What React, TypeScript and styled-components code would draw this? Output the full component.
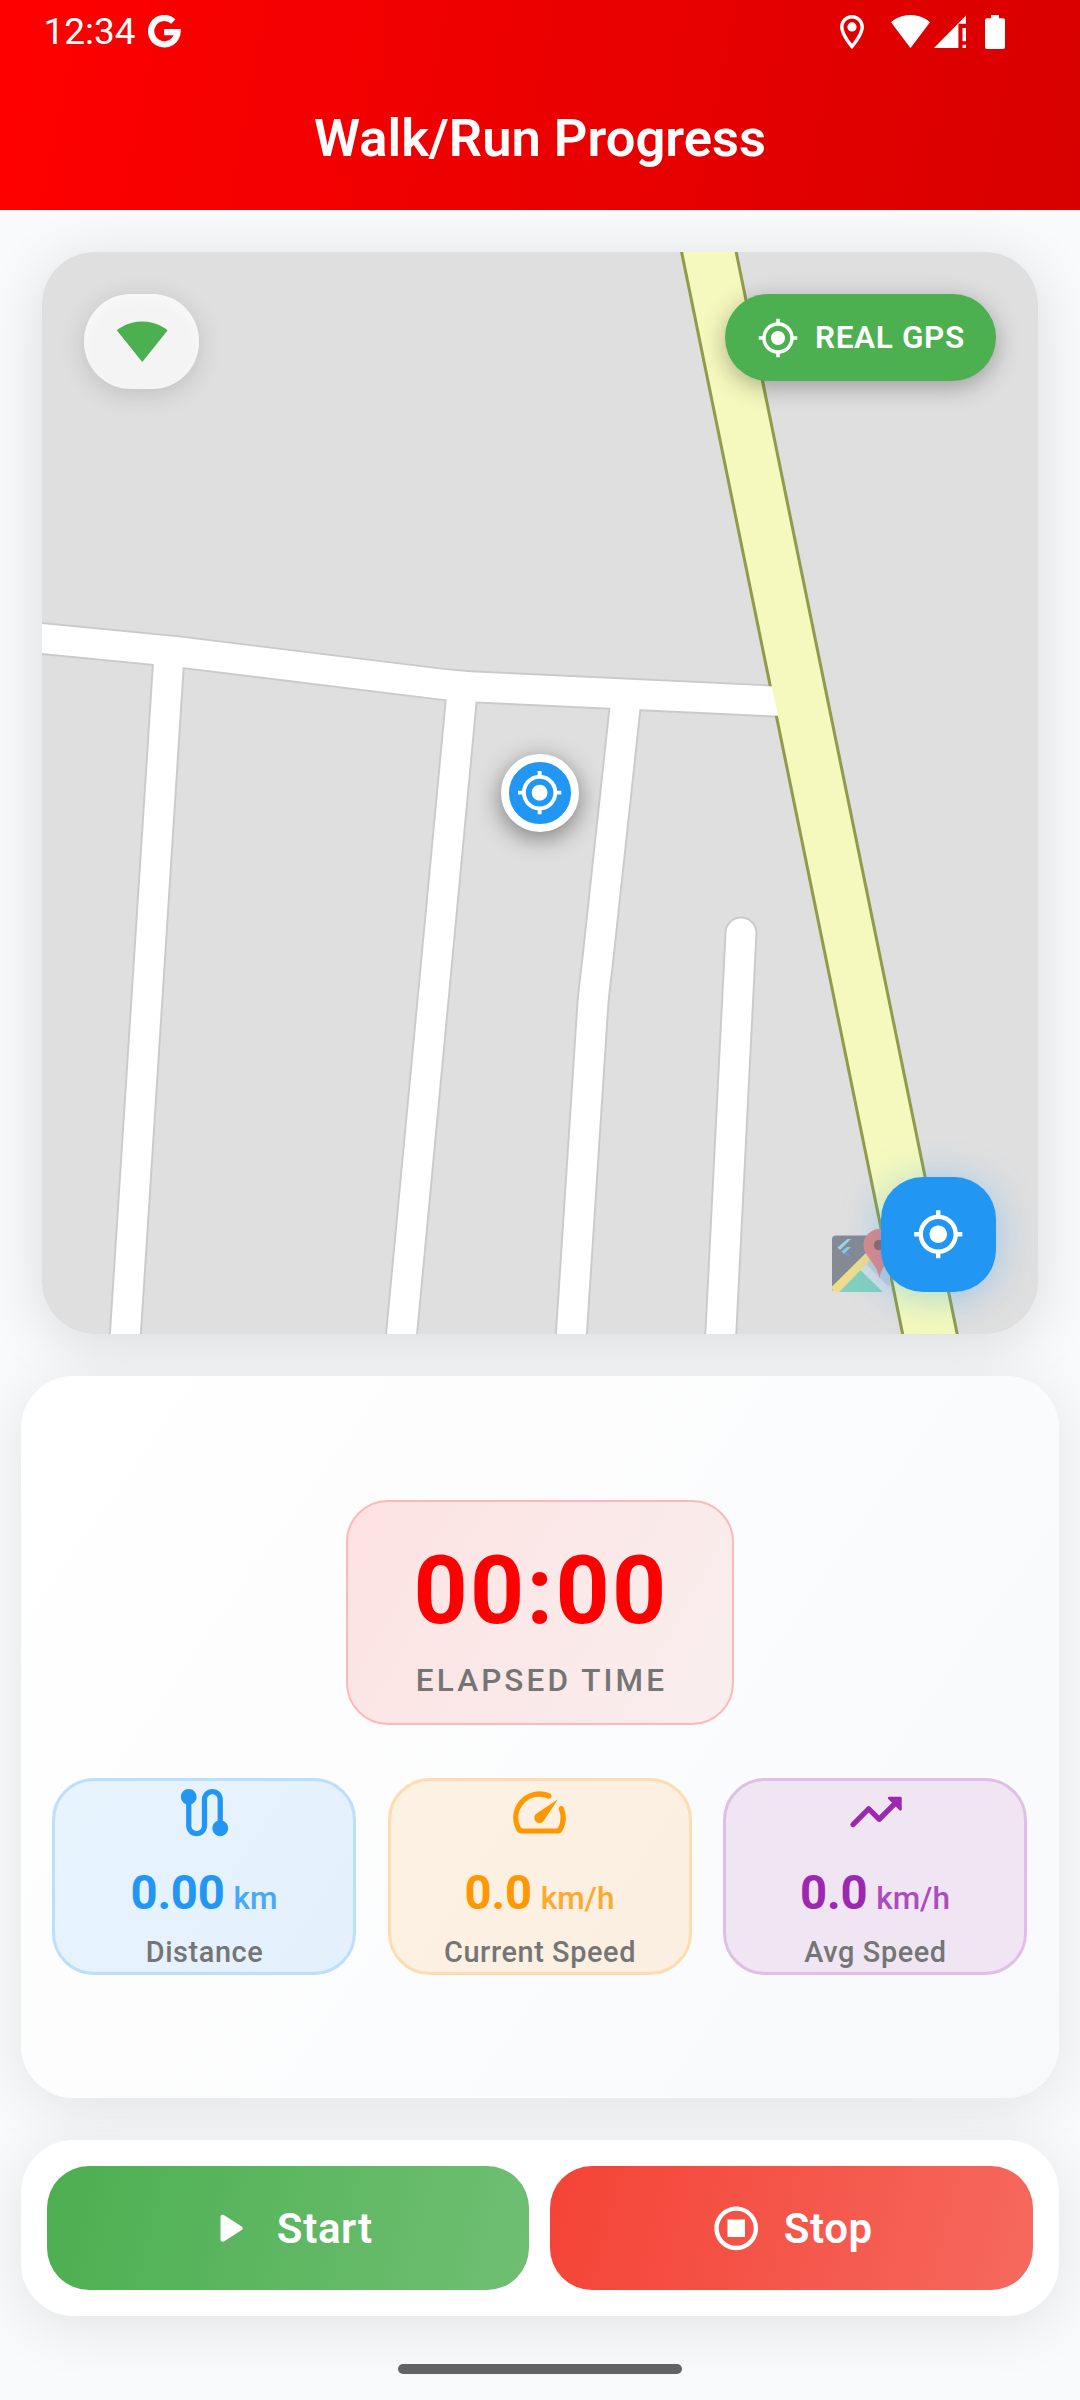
import React from "react";
import styled, { createGlobalStyle } from "styled-components";

const GlobalStyle = createGlobalStyle`
  * { box-sizing: border-box; }
  body { margin: 0; background: #f8fafc; }
  svg { display: block; flex: none; }
`;

const Screen = styled.div`
  width: 1080px;
  height: 2400px;
  overflow: hidden;
  display: flex;
  flex-direction: column;
  background: #f8fafc;
  font-family: Roboto, "Noto Sans", sans-serif;
`;

const Header = styled.header`
  position: relative;
  z-index: 1;
  flex: none;
  height: 210px;
  display: flex;
  flex-direction: column;
  color: #fff;
  background: linear-gradient(101deg, #ff0000 0%, #d80000 100%);
`;

const StatusBar = styled.div`
  height: 63px;
  padding: 0 75px 0 43.5px;
  display: flex;
  justify-content: space-between;
  align-items: center;
`;

const StatusLeft = styled.div`
  display: flex;
  align-items: center;
  gap: 12.5px;
`;

const Clock = styled.span`
  font-size: 37px;
  line-height: 43px;
`;

const StatusRight = styled.div`
  display: flex;
  align-items: center;
`;

const Gap = styled.span<{ $w: number }>`
  width: ${(p) => p.$w}px;
`;

const Toolbar = styled.div`
  flex: 1;
  padding-top: 3px;
  display: flex;
  align-items: center;
  justify-content: center;
`;

const Title = styled.h1`
  margin: 0;
  font-size: 52.5px;
  font-weight: 600;
  line-height: 62px;
`;

const Content = styled.main`
  flex: 1;
  padding: 42px 21px 0;
  display: flex;
  flex-direction: column;
  gap: 42px;
`;

const MapShell = styled.section`
  flex: none;
  margin: 0 21px;
  border-radius: 52.5px;
  box-shadow: 0 10px 60px rgba(0, 0, 0, 0.13);
`;

const MapCard = styled.div`
  position: relative;
  height: 1082px;
  border-radius: 52.5px;
  overflow: hidden;
  background: #dfdfdf;
`;

const SignalChip = styled.div`
  position: absolute;
  left: 42px;
  top: 42px;
  width: 115px;
  height: 94.5px;
  padding-left: 1px;
  border-radius: 47px;
  display: flex;
  align-items: center;
  justify-content: center;
  color: #4caf50;
  background: #f4f4f4;
  box-shadow: 0 5px 26px rgba(0, 0, 0, 0.14), inset 0 5px 14px rgba(255, 255, 255, 0.5);
`;

const GpsChip = styled.div`
  position: absolute;
  right: 42px;
  top: 42px;
  width: 271px;
  height: 87px;
  padding-left: 32px;
  border-radius: 43.5px;
  display: flex;
  align-items: center;
  gap: 16px;
  color: #fff;
  font-size: 31.5px;
  font-weight: 600;
  letter-spacing: 0.65px;
  white-space: nowrap;
  background: #4caf50;
  box-shadow: 0 6px 24px rgba(0, 0, 0, 0.3);
`;

const Marker = styled.div`
  position: absolute;
  left: 459px;
  top: 502px;
  width: 78px;
  height: 78px;
  border: 8px solid #fff;
  border-radius: 50%;
  display: flex;
  align-items: center;
  justify-content: center;
  background: #2196f3;
  color: #fff;
  box-shadow: 0 6px 24px rgba(0, 0, 0, 0.45);
`;

const LocateButton = styled.button`
  position: absolute;
  right: 42px;
  bottom: 42px;
  width: 115.5px;
  height: 115.5px;
  padding: 0;
  border: 0;
  border-radius: 42px;
  display: flex;
  align-items: center;
  justify-content: center;
  color: #fff;
  background: #2196f3;
  box-shadow: 0 5px 38px rgba(33, 150, 243, 0.36);
`;

const Panel = styled.section<{ $height: number; $bg: string }>`
  position: relative;
  flex: none;
  height: ${(p) => p.$height}px;
  border-radius: 52.5px;
  background: ${(p) => p.$bg};
  box-shadow: 0 10px 60px rgba(0, 0, 0, 0.095);
`;

const StatsPanel = styled(Panel)`
  padding: 124px 32px 0 31px;
  display: flex;
  flex-direction: column;
  align-items: center;
  gap: 53px;
`;

const TimerBox = styled.div`
  width: 388px;
  height: 225px;
  padding-top: 34px;
  border: 2px solid #fbb9b9;
  border-radius: 42px;
  display: flex;
  flex-direction: column;
  align-items: center;
  gap: 16px;
  background: linear-gradient(120deg, #fde2e2, #f9eeee);
`;

const TimerValue = styled.div`
  font-size: 94.5px;
  line-height: 110px;
  font-weight: 700;
  letter-spacing: 2.3px;
  margin-right: -3px;
  color: #fd0000;
`;

const TimerLabel = styled.div`
  font-size: 31.5px;
  line-height: 37px;
  font-weight: 500;
  letter-spacing: 3.1px;
  margin-right: -4px;
  color: #757575;
`;

const StatRow = styled.div`
  align-self: stretch;
  display: grid;
  grid-template-columns: repeat(3, 1fr);
  gap: 31.5px;
`;

const StatCard = styled.div<{ $color: string; $line: string; $bg: string }>`
  height: 197px;
  border: 3px solid ${(p) => p.$line};
  border-radius: 42px;
  display: flex;
  flex-direction: column;
  align-items: center;
  color: ${(p) => p.$color};
  background: ${(p) => p.$bg};
`;

const StatFigure = styled.div`
  margin-top: 21px;
  display: flex;
  align-items: baseline;
  gap: 9px;
  line-height: 56px;
`;

const Figure = styled.span`
  font-size: 47.25px;
  font-weight: 700;
  letter-spacing: -0.25px;
`;

const Unit = styled.span`
  font-size: 31.5px;
  font-weight: 500;
  opacity: 0.8;
`;

const StatLabel = styled.div`
  margin-top: 8px;
  padding-left: 1px;
  font-size: 28.875px;
  line-height: 34px;
  font-weight: 500;
  letter-spacing: 0.6px;
  color: #757575;
`;

const ActionPanel = styled(Panel)`
  padding: 26px;
  display: grid;
  grid-template-columns: 482px 483px;
  gap: 21px;
`;

const ActionButton = styled.button<{ $from: string; $to: string }>`
  height: 124px;
  padding: 0;
  border: 0;
  border-radius: 42px;
  display: flex;
  align-items: center;
  justify-content: center;
  gap: 21px;
  color: #fff;
  font-family: inherit;
  font-size: 42px;
  font-weight: 600;
  letter-spacing: 0.65px;
  background: linear-gradient(104.4deg, ${(p) => p.$from}, ${(p) => p.$to});
`;

const HomeIndicator = styled.div`
  position: relative;
  flex: none;
  align-self: center;
  width: 284px;
  height: 10px;
  margin-top: 6px;
  border-radius: 5px;
  background: #616462;
`;

const Glyph = ({ d, size }: { d: string; size: number }) => (
  <svg width={size} height={size} viewBox="0 0 24 24" fill="currentColor">
    <path d={d} />
  </svg>
);

const GPS =
  "M12 8c-2.21 0-4 1.79-4 4s1.79 4 4 4 4-1.79 4-4-1.79-4-4-4zm8.94 3A8.994 8.994 0 0 0 13 3.06V1h-2v2.06A8.994 8.994 0 0 0 3.06 11H1v2h2.06A8.994 8.994 0 0 0 11 20.94V23h2v-2.06A8.994 8.994 0 0 0 20.94 13H23v-2h-2.06zM12 19c-3.87 0-7-3.13-7-7s3.13-7 7-7 7 3.13 7 7-3.13 7-7 7z";
const WIFI =
  "M12.01 21.49L23.64 7c-.45-.34-4.93-4-11.64-4C5.28 3 .81 6.66.36 7l11.63 14.49.01.01.01-.01z";
const ROUTE =
  "M19 15.18V7c0-2.21-1.79-4-4-4s-4 1.79-4 4v10c0 1.1-.9 2-2 2s-2-.9-2-2V8.82C8.16 8.4 9 7.3 9 6c0-1.66-1.34-3-3-3S3 4.34 3 6c0 1.3.84 2.4 2 2.82V17c0 2.21 1.79 4 4 4s4-1.79 4-4V7c0-1.1.9-2 2-2s2 .9 2 2v8.18c-1.16.41-2 1.51-2 2.82 0 1.66 1.34 3 3 3s3-1.34 3-3c0-1.3-.84-2.4-2-2.82z";
const SPEED =
  "M19.46 10a1 1 0 0 0-.07 1 7.55 7.55 0 0 1 .52 1.81 8 8 0 0 1-.69 4.73 1 1 0 0 1-.89.53H5.68a1 1 0 0 1-.89-.54A8 8 0 0 1 13 6.06a7.69 7.69 0 0 1 2.11.56 1 1 0 0 0 1-.07 1 1 0 0 0-.13-1.76A10 10 0 0 0 3.35 19a2 2 0 0 0 1.72 1h13.85a2 2 0 0 0 1.74-1 10 10 0 0 0 .55-8.89 1 1 0 0 0-1.75-.11zM10.59 12.59a2 2 0 0 0 2.83 2.83l5.66-8.49z";
const TREND =
  "m16.85 6.85 1.44 1.44-4.88 4.88-3.29-3.29a.996.996 0 0 0-1.41 0l-6 6.01a.996.996 0 1 0 1.41 1.41L9.41 12l3.29 3.29c.39.39 1.02.39 1.41 0l5.59-5.58 1.44 1.44a.5.5 0 0 0 .85-.35V6.5a.48.48 0 0 0-.49-.5h-4.29a.5.5 0 0 0-.36.85z";
const PLAY =
  "M8 6.82v10.36c0 .79.87 1.27 1.54.84l8.14-5.18c.62-.39.62-1.29 0-1.69L9.54 5.98A.998.998 0 0 0 8 6.82z";
const STOP =
  "M12 2C6.48 2 2 6.48 2 12s4.48 10 10 10 10-4.48 10-10S17.52 2 12 2zm0 18c-4.42 0-8-3.58-8-8s3.58-8 8-8 8 3.58 8 8-3.58 8-8 8zm4-4H8V8h8v8z";

const streets = [
  "M30 637.3 L175 651.5 L440 684 Q455 686 470 686.7 L800 702.3",
  "M169 655 L125 1340",
  "M462 692 L401 1340",
  "M626.3 696 L597 967 Q594 990 592.8 1005 L571 1340",
  "M741 933 L720.5 1340",
];

const StreetMap = () => (
  <svg width="996" height="1082" viewBox="42 252 996 1082" fill="none">
    <g stroke="#cacaca" strokeWidth="32.8" strokeLinecap="round" strokeLinejoin="round">
      {streets.map((d) => (
        <path key={d} d={d} />
      ))}
    </g>
    <path d="M704.8 232 L933.8 1353" stroke="#929b4c" strokeWidth="56.5" />
    <g stroke="#fff" strokeWidth="29" strokeLinecap="round" strokeLinejoin="round">
      {streets.map((d) => (
        <path key={d} d={d} />
      ))}
    </g>
    <path d="M704.8 232 L933.8 1353" stroke="#f5f9be" strokeWidth="50.4" />
    <g>
      <path d="M836 1235.5H888L832 1291V1239.5Q832 1235.5 836 1235.5Z" fill="#868a93" />
      <path d="M861 1269L885 1245L890 1250V1285L888.5 1286.5Z" fill="#c3ccd3" />
      <path d="M839 1292L860.5 1270L883 1292Z" fill="#83d0be" />
      <path d="M861 1269L866 1264L888.5 1286.5Q887 1291.5 883 1292Z" fill="#d6dee5" />
      <path d="M832 1286.5L880 1239L884 1246.5L838.5 1292H836Q832 1292 832 1288Z" fill="#f0dc8b" />
      <path d="M837.5 1247.5L847.5 1239H851L840 1250Z" fill="#97d8eb" />
      <path d="M841.5 1251.5L847 1247H851L844 1254Z" fill="#8bc8e6" />
      <path d="M844 1254L846 1252L851 1255.5H847Z" fill="#6c9fce" />
      <path d="M879.5 1278.5C878 1264 863.5 1257 863.5 1245A16 16 0 0 1 895.5 1245C895.5 1257 881 1264 879.5 1278.5Z" fill="#e18885" />
      <circle cx="879" cy="1245" r="5.2" fill="#97625f" />
    </g>
  </svg>
);

export default function App() {
  return (
    <>
      <GlobalStyle />
      <Screen>
        <Header>
          <StatusBar>
            <StatusLeft>
              <Clock>12:34</Clock>
              <svg width="33" height="33" viewBox="148.5 15 33 33" fill="none">
                <path d="M173.8 21.5A13.2 13.2 0 1 0 178 32.2H164.6" stroke="#fff" strokeWidth="6.3" />
              </svg>
            </StatusLeft>
            <StatusRight>
              <svg width="24" height="34" viewBox="5 2 14 20" fill="#fff">
                <path d="M12 2C8.13 2 5 5.13 5 9c0 5.25 7 13 7 13s7-7.75 7-13c0-3.87-3.13-7-7-7zM7 9c0-2.76 2.24-5 5-5s5 2.24 5 5c0 2.88-2.88 7.19-5 9.88C9.92 16.21 7 11.85 7 9z" />
                <circle cx="12" cy="9" r="2.7" />
              </svg>
              <Gap $w={27} />
              <svg width="39" height="33" viewBox="0.36 3 23.28 18.5" preserveAspectRatio="none" fill="#fff">
                <path d={WIFI} />
              </svg>
              <Gap $w={3.5} />
              <svg width="32.5" height="33" viewBox="0 0 32.5 33" fill="#fff">
                <path d="M0 33H24.4V8.7H32.4V0ZM28.5 13H32.4V26.3H28.5ZM28.5 29.7H32.4V33H28.5Z" />
              </svg>
              <Gap $w={19} />
              <svg width="20" height="34" viewBox="0 0 20 34" fill="#fff">
                <path d="M6 0H14V3.3H18Q20 3.3 20 5.3V32Q20 34 18 34H2Q0 34 0 32V5.3Q0 3.3 2 3.3H6Z" />
              </svg>
            </StatusRight>
          </StatusBar>
          <Toolbar>
            <Title>Walk/Run Progress</Title>
          </Toolbar>
        </Header>

        <Content>
          <MapShell>
            <MapCard>
              <StreetMap />
              <SignalChip>
                <Glyph d={WIFI} size={52.5} />
              </SignalChip>
              <GpsChip>
                <Glyph d={GPS} size={42} />
                REAL GPS
              </GpsChip>
              <Marker>
                <Glyph d={GPS} size={47.25} />
              </Marker>
              <LocateButton aria-label="Center map">
                <Glyph d={GPS} size={52.5} />
              </LocateButton>
            </MapCard>
          </MapShell>

          <StatsPanel $height={722} $bg="linear-gradient(124.8deg, #ffffff, #f8f9fb)">
            <TimerBox>
              <TimerValue>00:00</TimerValue>
              <TimerLabel>ELAPSED TIME</TimerLabel>
            </TimerBox>
            <StatRow>
              <StatCard $color="#2196f3" $line="#bcdffb" $bg="linear-gradient(123deg, #e7f3fd, #e4f0fc)">
                <Glyph d={ROUTE} size={63} />
                <StatFigure>
                  <Figure>0.00</Figure>
                  <Unit>km</Unit>
                </StatFigure>
                <StatLabel>Distance</StatLabel>
              </StatCard>
              <StatCard $color="#ff9800" $line="#fdddb0" $bg="linear-gradient(123deg, #fdf1e3, #fbefe1)">
                <Glyph d={SPEED} size={63} />
                <StatFigure>
                  <Figure>0.0</Figure>
                  <Unit>km/h</Unit>
                </StatFigure>
                <StatLabel>Current Speed</StatLabel>
              </StatCard>
              <StatCard $color="#9c27b0" $line="#dfbfe6" $bg="#f0e5f3">
                <Glyph d={TREND} size={63} />
                <StatFigure>
                  <Figure>0.0</Figure>
                  <Unit>km/h</Unit>
                </StatFigure>
                <StatLabel>Avg Speed</StatLabel>
              </StatCard>
            </StatRow>
          </StatsPanel>

          <ActionPanel $height={176} $bg="#ffffff">
            <ActionButton $from="#4caf50" $to="#70bf73">
              <Glyph d={PLAY} size={52.5} />
              Start
            </ActionButton>
            <ActionButton $from="#f44336" $to="#f6695e">
              <Glyph d={STOP} size={52.5} />
              Stop
            </ActionButton>
          </ActionPanel>

          <HomeIndicator />
        </Content>
      </Screen>
    </>
  );
}
